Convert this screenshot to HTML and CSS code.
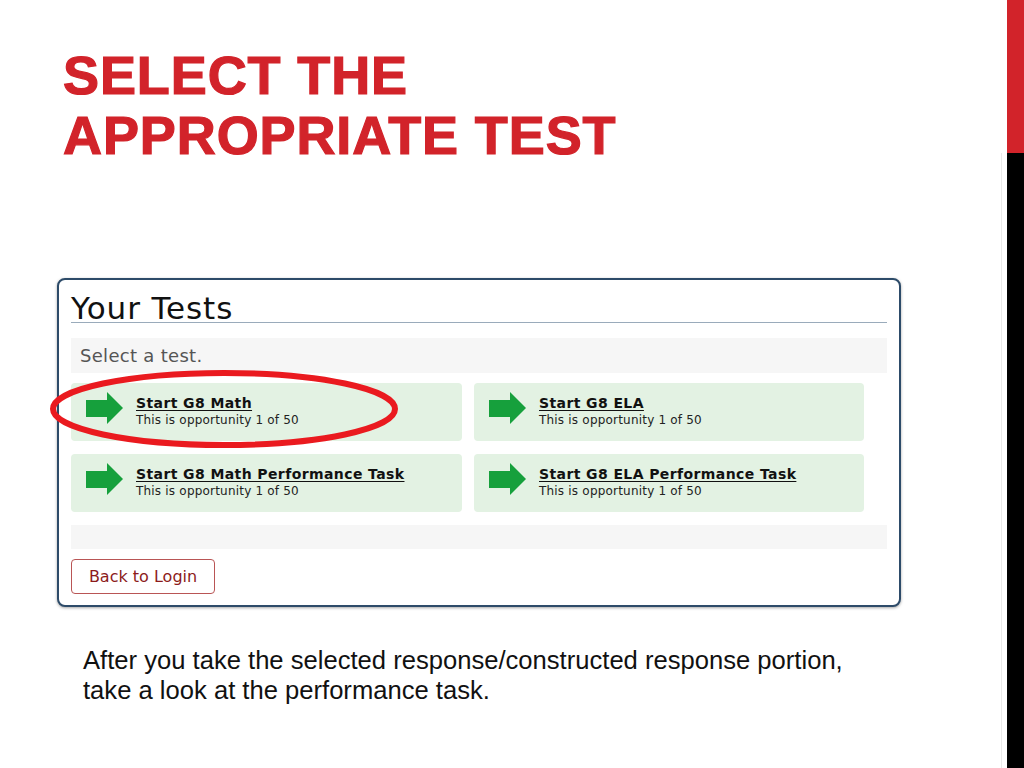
FILE: index.html
```html
<!DOCTYPE html>
<html lang="en">
<head>
<meta charset="utf-8">
<title>Select the appropriate test</title>
<link rel="stylesheet" href="styles.css">
</head>
<body>
<div class="slide">
  <main class="content">
    <h1 class="title">SELECT THE<br>APPROPRIATE TEST</h1>

    <section class="panel">
      <h2 class="panel-heading">Your Tests</h2>
      <div class="band band-select">Select a test.</div>
      <div class="cards">
        <a class="card" href="#">
          <svg class="arrow" viewBox="0 0 37 32" width="37" height="32"><path d="M0 8 H21 V0 L37 16 L21 32 V25 H0 Z" fill="#16a03c"/></svg>
          <span class="card-text">
            <span class="card-title">Start G8 Math</span>
            <span class="card-sub">This is opportunity 1 of 50</span>
          </span>
        </a>
        <a class="card" href="#">
          <svg class="arrow" viewBox="0 0 37 32" width="37" height="32"><path d="M0 8 H21 V0 L37 16 L21 32 V25 H0 Z" fill="#16a03c"/></svg>
          <span class="card-text">
            <span class="card-title">Start G8 ELA</span>
            <span class="card-sub">This is opportunity 1 of 50</span>
          </span>
        </a>
        <a class="card" href="#">
          <svg class="arrow" viewBox="0 0 37 32" width="37" height="32"><path d="M0 8 H21 V0 L37 16 L21 32 V25 H0 Z" fill="#16a03c"/></svg>
          <span class="card-text">
            <span class="card-title">Start G8 Math Performance Task</span>
            <span class="card-sub">This is opportunity 1 of 50</span>
          </span>
        </a>
        <a class="card" href="#">
          <svg class="arrow" viewBox="0 0 37 32" width="37" height="32"><path d="M0 8 H21 V0 L37 16 L21 32 V25 H0 Z" fill="#16a03c"/></svg>
          <span class="card-text">
            <span class="card-title">Start G8 ELA Performance Task</span>
            <span class="card-sub">This is opportunity 1 of 50</span>
          </span>
        </a>
      </div>
      <div class="band band-empty"></div>
      <button class="btn-back" type="button">Back to Login</button>

      <svg class="highlight" viewBox="0 0 360 86" width="360" height="86"><ellipse cx="177" cy="43" rx="171" ry="36" fill="none" stroke="#ea1a1f" stroke-width="6"/></svg>
    </section>

    <p class="note">After you take the selected response/constructed response portion,<br>take a look at the performance task.</p>
  </main>
  <aside class="rail">
    <div class="rail-line"><span class="rail-line-top"></span><span class="rail-line-bottom"></span></div>
    <div class="rail-bar"><span class="rail-red"></span><span class="rail-black"></span></div>
  </aside>
</div>
</body>
</html>
```

FILE: styles.css
```css
* { box-sizing: border-box; }
html, body { margin: 0; padding: 0; background: #fff; }
body { width: 1024px; height: 768px; overflow: hidden; }

.slide {
  display: flex;
  width: 1024px;
  height: 768px;
}

.content {
  flex: 1;
  padding: 45px 0 0 57px;
}

.title {
  margin: 0 0 0 6px;
  font-family: "Liberation Sans", Arial, sans-serif;
  font-weight: bold;
  font-size: 54px;
  line-height: 60px;
  letter-spacing: 0.9px;
  color: #d2232a;
  -webkit-text-stroke: 1.2px #d2232a;
}

.panel {
  position: relative;
  margin-top: 113px;
  width: 844px;
  border: 2px solid #2d4b69;
  border-radius: 8px;
  box-shadow: 0 1px 3px rgba(0, 0, 0, 0.35);
  padding: 14px 12px 11px 12px;
  background: #fff;
  font-family: "DejaVu Sans", Verdana, sans-serif;
}

.panel-heading {
  margin: 0;
  font-weight: normal;
  font-size: 31px;
  line-height: 28px;
  letter-spacing: 0.9px;
  color: #111;
  border-bottom: 1px solid #9aabbb;
}

.band {
  background: #f6f6f6;
}

.band-select {
  margin-top: 15px;
  height: 35px;
  padding-left: 9px;
  font-size: 18px;
  line-height: 35px;
  letter-spacing: 0.3px;
  color: #555;
}

.cards {
  margin-top: 10px;
  display: grid;
  grid-template-columns: 391px 390px;
  column-gap: 12px;
  row-gap: 13px;
}

.card {
  display: flex;
  align-items: center;
  height: 58px;
  padding-left: 15px;
  gap: 13px;
  background: #e3f2e3;
  border-radius: 4px;
  text-decoration: none;
  color: #111;
}

.arrow { flex: none; display: block; margin-top: -8px; }

.card-text {
  display: flex;
  flex-direction: column;
}

.card-title {
  font-weight: bold;
  font-size: 14px;
  line-height: 17px;
  letter-spacing: 0.4px;
  text-decoration: underline;
  text-underline-offset: 2px;
}

.card-sub {
  font-size: 12px;
  line-height: 17px;
  letter-spacing: 0.2px;
  color: #222;
}

.band-empty {
  margin-top: 13px;
  height: 24px;
}

.btn-back {
  display: block;
  margin-top: 10px;
  width: 144px;
  height: 35px;
  padding: 0;
  border: 1px solid #b95555;
  border-radius: 4px;
  background: #fff;
  color: #8c1b1b;
  font-family: "DejaVu Sans", Verdana, sans-serif;
  font-size: 16px;
}

.highlight {
  position: absolute;
  left: -12px;
  top: 86px;
}

.note {
  margin: 38px 0 0 26px;
  font-family: "Liberation Sans", Arial, sans-serif;
  font-size: 25.6px;
  line-height: 30px;
  color: #111;
}

.rail {
  width: 23px;
  display: flex;
}

.rail-line {
  width: 1px;
  display: flex;
  flex-direction: column;
}
.rail-line-top { height: 153px; }
.rail-line-bottom { flex: 1; background: #e9e9e9; }

.rail-bar {
  margin-left: 5px;
  width: 17px;
  display: flex;
  flex-direction: column;
}
.rail-red { height: 153px; background: #d2232a; }
.rail-black { flex: 1; background: #000; }
```
